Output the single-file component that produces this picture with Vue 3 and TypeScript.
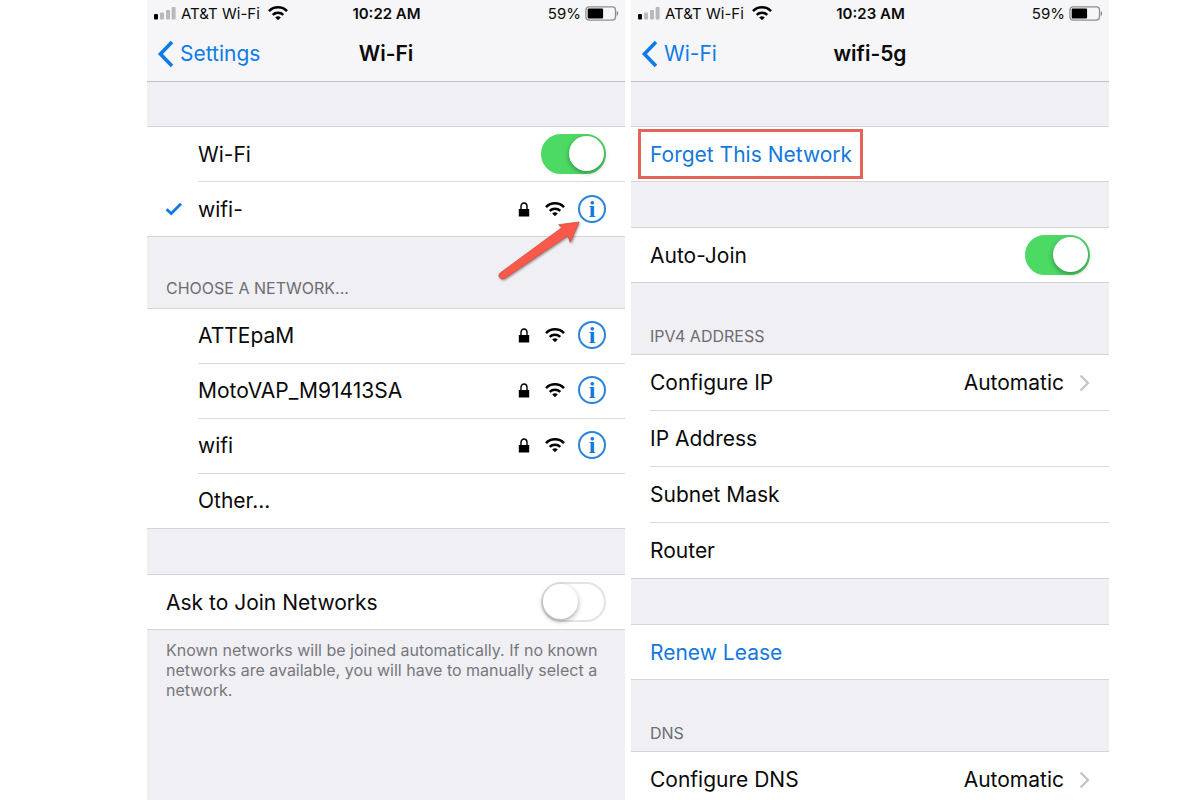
<script setup lang="ts">
import { ref } from 'vue'

interface Network {
  name: string
}

const wifiOn = ref(true)
const askToJoin = ref(false)
const autoJoin = ref(true)

const networks: Network[] = [
  { name: 'ATTEpaM' },
  { name: 'MotoVAP_M91413SA' },
  { name: 'wifi' },
]

const screens = [
  { id: 'list', time: '10:22 AM', back: 'Settings', title: 'Wi-Fi' },
  { id: 'detail', time: '10:23 AM', back: 'Wi-Fi', title: 'wifi-5g' },
]
</script>

<template>
  <svg class="defs" aria-hidden="true">
    <symbol id="wifi" viewBox="0 0 20 14">
      <path d="M1 5.1 A12.6 12.6 0 0 1 19 5.1" fill="none" stroke="#000" stroke-width="2.5" />
      <path d="M4.7 8.9 A7.6 7.6 0 0 1 15.3 8.9" fill="none" stroke="#000" stroke-width="2.4" />
      <path d="M10 14.2 L7.2 11.6 A4 4 0 0 1 12.8 11.6 Z" fill="#000" />
    </symbol>
    <symbol id="lock" viewBox="0 0 12 15">
      <path d="M3 8 V4.2 A3 3.2 0 0 1 9 4.2 V8" fill="none" stroke="#000" stroke-width="1.4" />
      <rect x="0.8" y="7" width="10.4" height="7.6" rx="0.4" fill="#000" />
    </symbol>
  </svg>

  <main class="page">
    <section v-for="s in screens" :key="s.id" class="screen" :class="s.id">
      <header class="top">
        <div class="status">
          <div class="carrier">
            <svg class="signal" viewBox="0 0 22 14" aria-hidden="true">
              <rect x="0" y="8" width="4" height="5.6" rx="1" fill="#000" />
              <rect x="6" y="6.4" width="4" height="7.2" rx="1" fill="#b9b9bc" />
              <rect x="12" y="4" width="4" height="9.6" rx="1" fill="#b9b9bc" />
              <rect x="17.6" y="1" width="4" height="12.6" rx="1" fill="#b9b9bc" />
            </svg>
            <span>AT&amp;T Wi-Fi</span>
            <svg class="status-wifi" aria-hidden="true"><use href="#wifi" /></svg>
          </div>
          <span class="time">{{ s.time }}</span>
          <div class="power">
            <span>59%</span>
            <svg class="battery" viewBox="0 0 34 15" aria-hidden="true">
              <rect x="0.9" y="0.9" width="29.6" height="13.2" rx="3" fill="none" stroke="#8f8f91" stroke-width="1.3" />
              <rect x="2.7" y="2.6" width="15.4" height="9.8" rx="0.8" fill="#000" />
              <path d="M31.6 5 C33.8 5.6 33.8 9.4 31.6 10 Z" fill="#8f8f91" />
            </svg>
          </div>
        </div>
        <nav class="nav">
          <a class="back" href="#">
            <svg viewBox="0 0 17 28" aria-hidden="true">
              <path d="M15 2 L3.4 14 L15 26" fill="none" stroke="#0f7be6" stroke-width="3.6" />
            </svg>
            {{ s.back }}
          </a>
          <h1>{{ s.title }}</h1>
        </nav>
      </header>

      <template v-if="s.id === 'list'">
        <div class="group inset first">
          <div class="row">
            <label for="wifi-toggle">Wi-Fi</label>
            <input id="wifi-toggle" v-model="wifiOn" class="switch" type="checkbox" role="switch" />
          </div>
          <div class="row">
            <svg class="check" viewBox="0 0 18 14" aria-hidden="true">
              <path d="M1.6 7.2 L6.2 11.6 L16 1.8" fill="none" stroke="#0f7be6" stroke-width="2.8" />
            </svg>
            <span class="name">wifi-</span>
            <svg class="lock" aria-hidden="true"><use href="#lock" /></svg>
            <svg class="strength" aria-hidden="true"><use href="#wifi" /></svg>
            <button class="info" type="button" aria-label="Details for wifi-">
              <span>i</span>
              <svg class="arrow" viewBox="0 0 90 70" aria-hidden="true">
                <path
                  d="M4.4 56.8 L65.7 11.7 L62.7 8.7 L83 6 L74.3 26.3 L71.7 19.8 L8.6 62.4 C4.4 64.6 0.8 59.6 4.4 56.8 Z"
                  fill="#f9594b"
                  stroke="#d9503f"
                  stroke-width="0.8"
                />
              </svg>
            </button>
          </div>
        </div>

        <h2 class="caption">CHOOSE A NETWORK...</h2>
        <div class="group inset networks">
          <div v-for="n in networks" :key="n.name" class="row">
            <span class="name">{{ n.name }}</span>
            <svg class="lock" aria-hidden="true"><use href="#lock" /></svg>
            <svg class="strength" aria-hidden="true"><use href="#wifi" /></svg>
            <button class="info" type="button" :aria-label="'Details for ' + n.name"><span>i</span></button>
          </div>
          <button class="row" type="button">Other...</button>
        </div>

        <div class="group spaced">
          <div class="row">
            <label for="ask-toggle">Ask to Join Networks</label>
            <input id="ask-toggle" v-model="askToJoin" class="switch" type="checkbox" role="switch" />
          </div>
        </div>
        <p class="note">
          Known networks will be joined automatically. If no known networks are available, you will have to manually
          select a network.
        </p>
      </template>

      <template v-else>
        <div class="group first">
          <button class="row action forget" type="button">Forget This Network</button>
        </div>

        <div class="group spaced">
          <div class="row">
            <label for="auto-toggle">Auto-Join</label>
            <input id="auto-toggle" v-model="autoJoin" class="switch" type="checkbox" role="switch" />
          </div>
        </div>

        <h2 class="caption">IPV4 ADDRESS</h2>
        <div class="group tall">
          <button class="row" type="button">
            <span class="name">Configure IP</span>
            <span>Automatic</span>
            <svg class="chevron" viewBox="0 0 11 18" aria-hidden="true">
              <path d="M1.5 1.5 L9 9 L1.5 16.5" fill="none" stroke="#c3c3c8" stroke-width="2.2" />
            </svg>
          </button>
          <div class="row">IP Address</div>
          <div class="row">Subnet Mask</div>
          <div class="row">Router</div>
        </div>

        <div class="group spaced">
          <button class="row action" type="button">Renew Lease</button>
        </div>

        <h2 class="caption">DNS</h2>
        <div class="group tall">
          <button class="row" type="button">
            <span class="name">Configure DNS</span>
            <span>Automatic</span>
            <svg class="chevron" viewBox="0 0 11 18" aria-hidden="true">
              <path d="M1.5 1.5 L9 9 L1.5 16.5" fill="none" stroke="#c3c3c8" stroke-width="2.2" />
            </svg>
          </button>
        </div>
      </template>
    </section>
  </main>
</template>

<style>
body {
  margin: 0;
  background: #fff;
}
</style>

<style scoped>
.defs {
  position: absolute;
  width: 0;
  height: 0;
}

.page {
  display: grid;
  grid-template-columns: 1fr 1fr;
  gap: 6px;
  height: 100vh;
  padding: 0 91px 0 147px;
  box-sizing: border-box;
  overflow: hidden;
  font-family: Inter, Roboto, sans-serif;
  font-size: 21px;
  color: #0a0a0a;
}

.screen {
  min-width: 0;
  overflow: hidden;
  background: #efeff4;
}

.top {
  height: 81px;
  border-bottom: 1px solid #bfbfc4;
  background: #f6f6f8;
}

.status {
  display: grid;
  grid-template-columns: 1fr auto 1fr;
  align-items: center;
  height: 26px;
  padding: 0 6px 0 7px;
  font-size: 15px;
}

.carrier,
.power {
  display: flex;
  align-items: center;
}

.carrier {
  gap: 5px;
}

.power {
  justify-content: flex-end;
  gap: 4px;
}

.signal {
  width: 22px;
  height: 14px;
}

.status-wifi {
  width: 20px;
  height: 14px;
  margin-left: 3px;
}

.battery {
  width: 34px;
  height: 15px;
}

.time {
  font-weight: 600;
}

.nav {
  display: grid;
  grid-template-columns: 1fr auto 1fr;
  align-items: center;
  height: 55px;
  padding: 0 10px;
}

.back {
  display: flex;
  align-items: center;
  gap: 6px;
  color: #0f7be6;
  text-decoration: none;
}

.back svg {
  width: 17px;
  height: 28px;
}

h1 {
  margin: 0;
  font-size: 21px;
  font-weight: 600;
}

.group {
  padding-left: 19px;
  border-top: 1px solid #d4d4d8;
  border-bottom: 1px solid #d4d4d8;
  background: #fff;
}

.group.inset {
  padding-left: 51px;
}

.group.first {
  margin-top: 44px;
}

.group.spaced {
  margin-top: 45px;
}

.row {
  position: relative;
  display: flex;
  align-items: center;
  width: 100%;
  height: 55px;
  padding: 0 19px 0 0;
  box-sizing: border-box;
  border: 0;
  border-bottom: 1px solid #d9d9dc;
  background: none;
  font: inherit;
  color: inherit;
  text-align: left;
}

.networks .row {
  padding-bottom: 2px;
}

.tall .row {
  height: 56px;
}

.row:last-child {
  height: 54px;
  border-bottom: 0;
}

.tall .row:last-child {
  height: 55px;
}

.row label,
.name {
  flex: 1;
}

.row.action {
  color: #1478dc;
}

.forget::after {
  content: '';
  position: absolute;
  top: 2px;
  left: -12px;
  width: 219px;
  height: 44px;
  border: 3px solid #e5645a;
}

.check {
  position: absolute;
  left: -33px;
  width: 18px;
  height: 14px;
}

.lock {
  width: 12px;
  height: 15px;
  margin-right: 15px;
}

.strength {
  width: 20px;
  height: 14px;
  margin-right: 13px;
}

.info {
  position: relative;
  display: flex;
  align-items: center;
  justify-content: center;
  width: 28px;
  height: 28px;
  padding: 0;
  border: 2px solid #2a84dc;
  border-radius: 50%;
  background: none;
  color: #1478dc;
  font-family: 'Liberation Serif', serif;
  font-size: 24px;
  font-weight: 700;
  line-height: 24px;
}

.arrow {
  position: absolute;
  top: 19px;
  left: -84px;
  z-index: 1;
  width: 90px;
  height: 70px;
  filter: drop-shadow(1px 1px 1px rgba(0, 0, 0, 0.4));
}

.switch {
  appearance: none;
  width: 65px;
  height: 40px;
  margin: 0;
  border: 2px solid #e3e3e5;
  border-radius: 20px;
  box-sizing: border-box;
  background: #fff;
}

.switch::before {
  content: '';
  display: block;
  width: 35px;
  height: 35px;
  border-radius: 50%;
  background: #fff;
  box-shadow: 0 2px 5px rgba(0, 0, 0, 0.35);
}

.switch:checked {
  border-color: #4cd964;
  background: #4cd964;
}

.switch:checked::before {
  margin-left: 26px;
}

.chevron {
  width: 11px;
  height: 18px;
  margin-left: 15px;
}

.caption {
  display: flex;
  align-items: flex-end;
  height: 71px;
  margin: 0;
  padding: 0 19px 10px;
  box-sizing: border-box;
  font-size: 16px;
  font-weight: 400;
  line-height: 20px;
  color: #6d6d72;
}

.detail .caption {
  padding-bottom: 8px;
}

.note {
  margin: 0;
  padding: 10px 19px;
  font-size: 16px;
  line-height: 20px;
  color: #77777c;
}
</style>
